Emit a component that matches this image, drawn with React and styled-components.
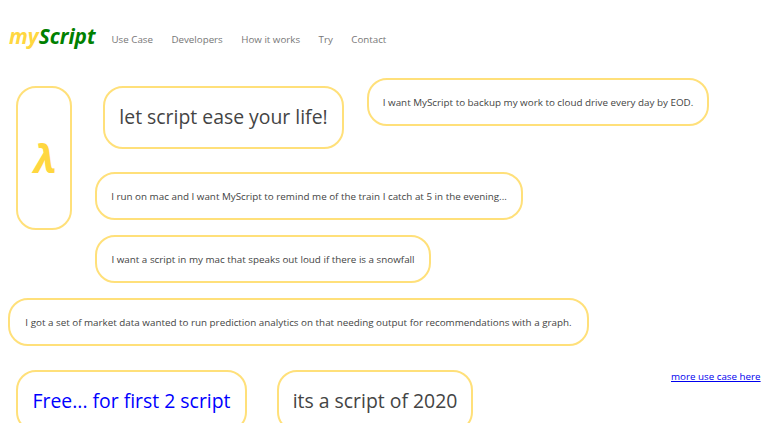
import React from "react";
import styled, { createGlobalStyle } from "styled-components";

const Global = createGlobalStyle`
  html, body {
    margin: 0;
    padding: 0;
    background: #fff;
    overflow: hidden;
    font-family: "Open Sans", "Liberation Sans", sans-serif;
    color: #444;
  }
`;

const Page = styled.div`
  width: 777px;
  height: 423px;
  overflow: hidden;
`;

const Header = styled.header`
  display: flex;
  align-items: center;
  height: 78px;
  padding-left: 9px;
`;

const Logo = styled.div`
  font-size: 20.8px;
  font-weight: 700;
  font-style: italic;
  color: #008000;
  width: 102.5px;
  margin-top: -6px;

  span {
    color: #ffd740;
  }
`;

const Nav = styled.nav`
  display: flex;
  gap: 18.5px;
`;

const NavLink = styled.a`
  font-size: 9.75px;
  color: #777;
`;

const Bubble = styled.div`
  box-sizing: border-box;
  display: flex;
  align-items: center;
  justify-content: center;
  flex: none;
  white-space: nowrap;
  border: 2px solid #ffe07a;
  border-radius: 20px;
  padding-bottom: ${p => (p.$big ? "2px" : "1px")};
  font-size: ${p => (p.$big ? "19.4px" : "9.84px")};
  color: ${p => p.$color || "#444"};
  width: ${p => p.$w}px;
  height: ${p => p.$h}px;
  margin: ${p => p.$m || 0};
`;

const Lambda = styled(Bubble)`
  font-size: 40px;
  font-weight: 700;
  font-style: italic;
  color: #ffd740;
  padding-left: 2px;
`;

const Top = styled.section`
  display: flex;
  align-items: flex-start;
  padding-left: 16px;
`;

const Column = styled.div`
  display: flex;
  flex-direction: column;
  align-items: flex-start;
`;

const HeroRow = styled.div`
  display: flex;
  align-items: flex-start;
`;

const BottomRow = styled.div`
  display: flex;
  align-items: flex-start;
  padding-left: 16px;
  margin-top: 24px;
`;

const More = styled.a`
  font-size: 9.8px;
  color: #0000ee;
  text-decoration: underline;
  margin: 0 0 0 198px;
`;

export default function App() {
  return (
    <Page>
      <Global />
      <Header>
        <Logo>
          <span>my</span>Script
        </Logo>
        <Nav>
          {["Use Case", "Developers", "How it works", "Try", "Contact"].map(item => (
            <NavLink key={item}>{item}</NavLink>
          ))}
        </Nav>
      </Header>
      <Top>
        <Lambda $w={56} $h={144} $m="8px 0 0 0">
          λ
        </Lambda>
        <Column>
          <HeroRow>
            <Bubble $big $w={241} $h={63} $m="8px 0 0 31px">
              let script ease your life!
            </Bubble>
            <Bubble $w={342} $h={48} $m="0 0 0 23px">
              I want MyScript to backup my work to cloud drive every day by EOD.
            </Bubble>
          </HeroRow>
          <Bubble $w={428} $h={48} $m="23px 0 0 23px">
            I run on mac and I want MyScript to remind me of the train I catch at 5 in the evening...
          </Bubble>
          <Bubble $w={336} $h={48} $m="15px 0 0 23px">
            I want a script in my mac that speaks out loud if there is a snowfall
          </Bubble>
        </Column>
      </Top>
      <Bubble $w={581} $h={48} $m="15px 0 0 8px">
        I got a set of market data wanted to run prediction analytics on that needing output for recommendations with a graph.
      </Bubble>
      <BottomRow>
        <Bubble $big $color="#0000ff" $w={231} $h={62}>
          Free... for first 2 script
        </Bubble>
        <Bubble $big $w={196} $h={62} $m="0 0 0 30px">
          its a script of 2020
        </Bubble>
        <More>more use case here</More>
      </BottomRow>
    </Page>
  );
}
